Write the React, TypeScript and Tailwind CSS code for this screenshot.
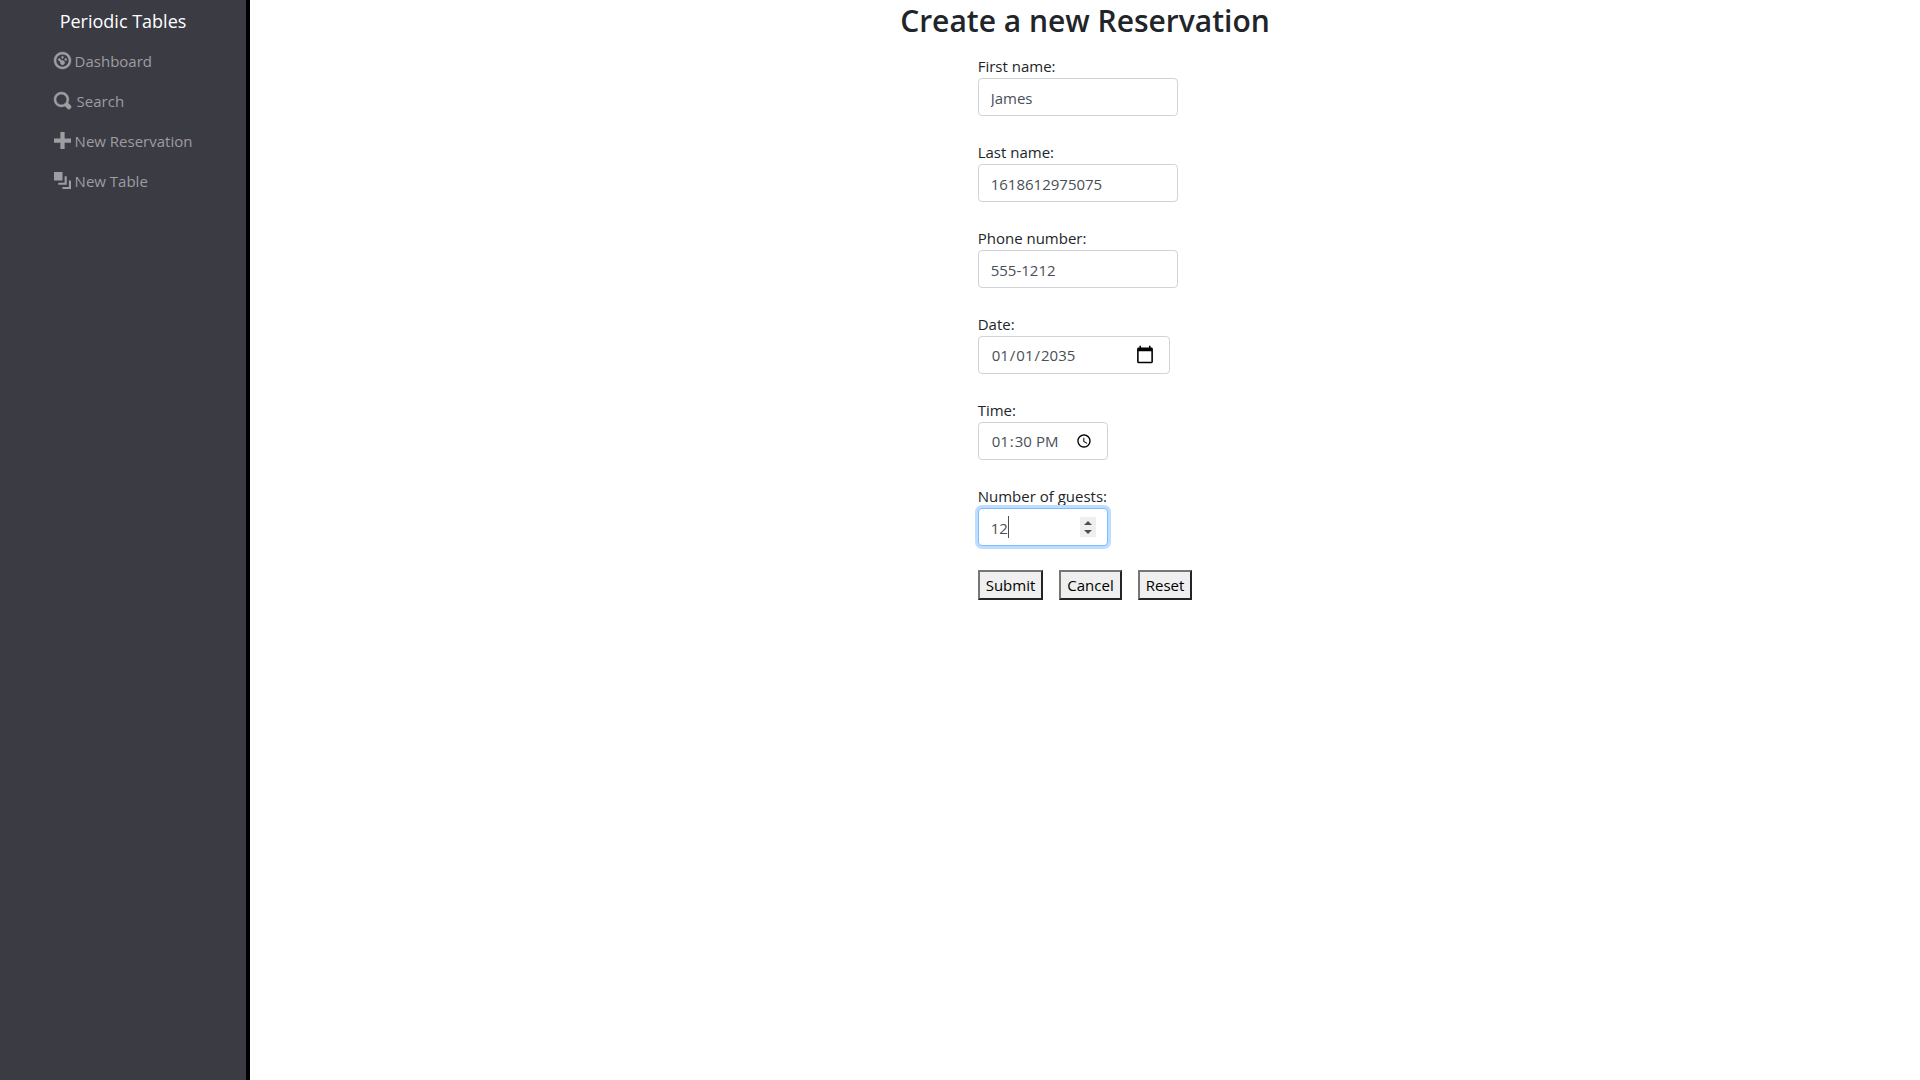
import { useState } from "react";
import type { FormEvent, ReactNode } from "react";

const icons = {
  dashboard:
    "M4 0c-2.2 0-4 1.8-4 4s1.8 4 4 4 4-1.8 4-4-1.8-4-4-4zm0 1c1.66 0 3 1.34 3 3s-1.34 3-3 3-3-1.34-3-3 1.34-3 3-3zm0 1c-.28 0-.5.22-.5.5s.22.5.5.5.5-.22.5-.5-.22-.5-.5-.5zm-1.66 1a.5.5 0 0 0-.19.84l.91.91c-.02.08-.06.16-.06.25 0 .55.45 1 1 1s1-.45 1-1-.45-1-1-1c-.09 0-.17.04-.25.06l-.91-.91a.5.5 0 0 0-.44-.16.5.5 0 0 0-.06 0zm3.16 0c-.28 0-.5.22-.5.5s.22.5.5.5.5-.22.5-.5-.22-.5-.5-.5z",
  search:
    "M3.5 0c-1.93 0-3.5 1.57-3.5 3.5s1.57 3.5 3.5 3.5c.59 0 1.17-.14 1.66-.41a1 1 0 0 0 .13.13l1 1a1.02 1.02 0 1 0 1.44-1.44l-1-1a1 1 0 0 0-.16-.13c.27-.49.44-1.06.44-1.66 0-1.93-1.55-3.5-3.5-3.5zm0 1c1.39 0 2.5 1.11 2.5 2.5 0 .66-.24 1.27-.66 1.72-.01.01-.02.02-.03.03a1 1 0 0 0-.13.13c-.44.4-1.04.63-1.69.63-1.39 0-2.5-1.11-2.5-2.5s1.11-2.5 2.5-2.5z",
  plus: "M3 0v3h-3v2h3v3h2v-3h3v-2h-3v-3h-2z",
  layers: "M0 0v4h4v-4h-4zm5 2v3h-3v1h4v-4h-1zm2 2v3h-3v1h4v-4h-1z",
};

type NavLinkProps = { path: string; gap?: string; stroke?: number; children: ReactNode };

function NavLink({ path, gap = "gap-1", stroke = 0, children }: NavLinkProps) {
  return (
    <li>
      <a href="#" className={`flex h-10 items-center text-[#9d9da2] hover:text-white ${gap}`}>
        <svg
          viewBox="0 0 8 8"
          className="size-[17px] overflow-visible"
          fill="currentColor"
          stroke="currentColor"
          strokeWidth={stroke}
          aria-hidden="true"
        >
          <path d={path} />
        </svg>
        <span className="pt-0.5">{children}</span>
      </a>
    </li>
  );
}

function Field({ id, label, children }: { id: string; label: string; children: ReactNode }) {
  return (
    <div className="mb-6 flex flex-col items-start">
      <label htmlFor={id} className="h-6 leading-6">
        {label}
      </label>
      {children}
    </div>
  );
}

const control =
  "h-[38px] rounded border border-[#ced4da] bg-white px-3 text-[#495057] outline-none focus:border-[#80bdff] focus:ring-3 focus:ring-[#bfdeff]";
const button =
  "h-[30px] border-2 border-t-[#767676] border-l-[#767676] border-r-[#212529] border-b-[#212529] bg-[#efefef] px-1.5 leading-6 text-black";

export default function App() {
  const [form, setForm] = useState({
    first: "James",
    last: "1618612975075",
    phone: "555-1212",
    date: "2035-01-01",
    time: "13:30",
    people: "12",
  });
  const bind = (name: keyof typeof form) => ({
    id: name,
    name,
    value: form[name],
    onChange: (e: { target: { value: string } }) => setForm({ ...form, [name]: e.target.value }),
  });

  return (
    <div className="flex min-h-screen bg-white font-['Open_Sans',sans-serif] text-[15px] text-[#212529]">
      <nav className="flex w-[250px] shrink-0 flex-col items-center border-r-4 border-black bg-[#3b3b44]">
        <a href="#" className="flex h-10 items-center pt-0.5 text-lg text-white">
          Periodic Tables
        </a>
        <ul>
          <NavLink path={icons.dashboard} stroke={0.2}>Dashboard</NavLink>
          <NavLink path={icons.search} stroke={0.2} gap="gap-1.5">Search</NavLink>
          <NavLink path={icons.plus}>New Reservation</NavLink>
          <NavLink path={icons.layers}>New Table</NavLink>
        </ul>
      </nav>
      <main className="flex grow flex-col items-center">
        <h1 className="mb-3 h-[42px] text-[30px] leading-[42px] font-semibold">Create a new Reservation</h1>
        <form onSubmit={(e: FormEvent) => e.preventDefault()}>
          <Field id="first" label="First name:">
            <input type="text" className={`${control} w-[200px] pt-0.5`} {...bind("first")} />
          </Field>
          <Field id="last" label="Last name:">
            <input type="text" className={`${control} w-[200px] pt-0.5`} {...bind("last")} />
          </Field>
          <Field id="phone" label="Phone number:">
            <input type="tel" className={`${control} w-[200px] pt-0.5`} {...bind("phone")} />
          </Field>
          <Field id="date" label="Date:">
            <input
              type="date"
              className={`${control} w-48 [&::-webkit-calendar-picker-indicator]:size-5`}
              {...bind("date")}
            />
          </Field>
          <Field id="time" label="Time:">
            <input type="time" className={`${control} w-[130px]`} {...bind("time")} />
          </Field>
          <Field id="people" label="Number of guests:">
            <div className="relative">
              <input
                type="number"
                autoFocus
                className={`${control} peer w-[130px] pt-0.5 caret-transparent`}
                {...bind("people")}
              />
              <span className="pointer-events-none invisible absolute top-2 left-[13px] flex h-[22px] border-r border-[#495057] select-none peer-focus:visible">
                <span className="invisible" aria-hidden="true">{form.people}</span>
              </span>
              <span className="pointer-events-none absolute top-[9px] right-3 flex h-5 w-4 items-center justify-center bg-[#efefef]">
                <svg viewBox="0 0 8 14" className="h-3.5 w-2" fill="#505050" aria-hidden="true">
                  <path d="M4 1 8 5H0zM4 14 0 10h8z" />
                </svg>
              </span>
            </div>
          </Field>
          <div className="flex gap-4">
            <button type="submit" className={button}>Submit</button>
            <button type="button" className={button}>Cancel</button>
            <button type="reset" className={button}>Reset</button>
          </div>
        </form>
      </main>
    </div>
  );
}
